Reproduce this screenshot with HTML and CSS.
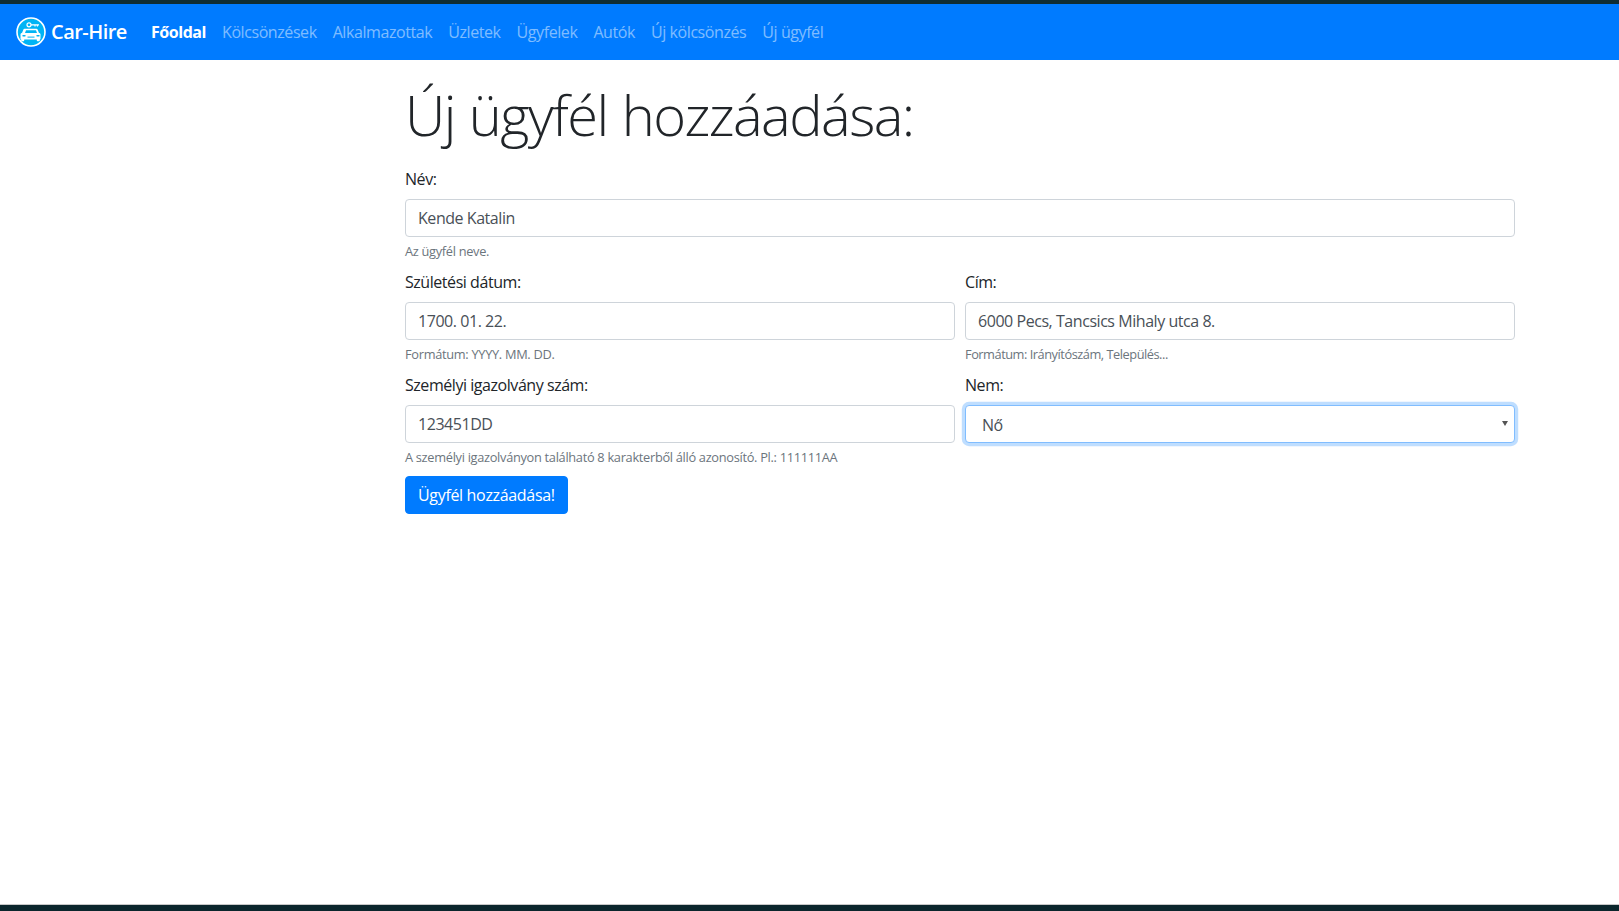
FILE: index.html
```html
<!DOCTYPE html>
<html lang="hu">
<head>
    <meta charset="UTF-8">
    <meta name="viewport" content="width=device-width, initial-scale=1.0">
    <title>Car-Hire</title>
    <link rel="stylesheet" href="styles.css">
</head>
<body>

<div class="top-strip"></div>

<header class="navbar">
    <a class="brand" href="#">
        <svg class="brand-logo" viewBox="0 0 30 30" width="30" height="30" aria-hidden="true">
            <circle cx="15" cy="15" r="14" fill="#00b4f5" stroke="#fff" stroke-width="1.6"/>
            <!-- key -->
            <circle cx="13" cy="7.800" r="2" fill="none" stroke="#fff" stroke-width="1.200"/>
            <path d="M15 7.200h8v1.200h-1v1.200h-1.200V8.400h-1.200v1.200h-1.200V8.400H15z" fill="#fff"/>
            <!-- car -->
            <path d="M9.600 11.800h10.800c.6 0 1 .3 1.200.8l1.300 3.200 1 .5c.4.2.6.6.6 1v4.400c0 .4-.3.7-.7.700v1.100c0 .4-.3.7-.7.700h-1.600c-.4 0-.7-.3-.7-.7v-1H8.200v1c0 .4-.3.7-.7.700H5.900c-.4 0-.7-.3-.7-.7v-1.100c-.4 0-.7-.3-.7-.7v-4.400c0-.4.2-.8.600-1l1-.5 1.300-3.200c.2-.5.700-.8 1.200-.8z" fill="#fff"/>
            <path d="M10 13.200h10l1 2.800H9z" fill="#00b4f5"/>
            <rect x="6.300" y="18" width="3.400" height="1.600" rx=".8" fill="#00b4f5"/>
            <rect x="20.300" y="18" width="3.400" height="1.600" rx=".8" fill="#00b4f5"/>
            <rect x="11.500" y="19.600" width="7" height="1" fill="#00b4f5"/>
        </svg>
        <span class="brand-name">Car-Hire</span>
    </a>
    <nav class="nav-links">
        <a class="nav-link active" href="#">Főoldal</a>
        <a class="nav-link" href="#">Kölcsönzések</a>
        <a class="nav-link" href="#">Alkalmazottak</a>
        <a class="nav-link" href="#">Üzletek</a>
        <a class="nav-link" href="#">Ügyfelek</a>
        <a class="nav-link" href="#">Autók</a>
        <a class="nav-link" href="#">Új kölcsönzés</a>
        <a class="nav-link" href="#">Új ügyfél</a>
    </nav>
</header>

<main class="content">
    <h1 class="page-title">Új ügyfél hozzáadása:</h1>

    <form class="customer-form">
        <div class="form-group">
            <label for="name">Név:</label>
            <input class="form-control" type="text" id="name" value="Kende Katalin">
            <small class="form-text">Az ügyfél neve.</small>
        </div>

        <div class="form-row">
            <div class="form-group">
                <label for="birth">Születési dátum:</label>
                <input class="form-control" type="text" id="birth" value="1700. 01. 22.">
                <small class="form-text">Formátum: YYYY. MM. DD.</small>
            </div>
            <div class="form-group">
                <label for="address">Cím:</label>
                <input class="form-control" type="text" id="address" value="6000 Pecs, Tancsics Mihaly utca 8.">
                <small class="form-text form-text-tight">Formátum: Irányítószám, Település...</small>
            </div>
        </div>

        <div class="form-row">
            <div class="form-group">
                <label for="idcard">Személyi igazolvány szám:</label>
                <input class="form-control" type="text" id="idcard" value="123451DD">
                <small class="form-text">A személyi igazolványon található 8 karakterből álló azonosító. Pl.: 111111AA</small>
            </div>
            <div class="form-group">
                <label for="gender">Nem:</label>
                <div class="select-wrap">
                    <select class="form-control focused" id="gender">
                        <option>Nő</option>
                        <option>Férfi</option>
                    </select>
                </div>
            </div>
        </div>

        <button class="btn-primary" type="submit">Ügyfél hozzáadása!</button>
    </form>
</main>

<footer class="bottom-strip"></footer>

</body>
</html>
```

FILE: styles.css
```css
* {
    box-sizing: border-box;
}
html, body {
    height: 100%;
}
body {
    font-family: "Open Sans", Arial, sans-serif;
    font-size: 16px;
    line-height: 1.5;
    letter-spacing: -0.45px;
    color: #212529;
    margin: 0;
    padding: 0;
    background-color: #fff;
    display: flex;
    flex-direction: column;
    overflow: hidden;
}
a {
    text-decoration: none;
}
.top-strip {
    height: 4px;
    background-color: #0f2d33;
}
.navbar {
    height: 56px;
    padding: 8px 16px;
    background-color: #007bff;
    display: flex;
    align-items: center;
}
.brand {
    display: flex;
    align-items: center;
    gap: 5px;
    width: 111px;
    margin-right: 16px;
    color: #fff;
    font-size: 20px;
    font-weight: 600;
    letter-spacing: -0.55px;
    white-space: nowrap;
}
.brand-logo {
    flex: none;
}
.nav-links {
    display: flex;
}
.nav-link {
    padding: 8px;
    letter-spacing: -0.42px;
    color: rgba(255, 255, 255, .5);
}
.nav-link.active {
    color: #fff;
    font-weight: 700;
    letter-spacing: -0.45px;
}
.content {
    flex: 1;
    width: 1140px;
    margin-left: 390px;
    padding: 15px 15px 0;
}
.page-title {
    font-size: 56px;
    font-weight: 300;
    line-height: 1.2;
    margin: 6px 0 19px;
    letter-spacing: -1.55px;
    word-spacing: 1px;
}
.form-group {
    flex: 1;
    min-width: 0;
    margin-bottom: 8.8px;
}
.form-row {
    display: flex;
    gap: 10px;
}
label {
    display: block;
    margin-bottom: 8px;
}
.form-control {
    display: block;
    width: 100%;
    height: 38px;
    padding: 6px 12px;
    font: inherit;
    letter-spacing: inherit;
    color: #495057;
    background-color: #fff;
    border: 1px solid #ced4da;
    border-radius: 4px;
}
.select-wrap {
    position: relative;
}
.select-wrap::after {
    content: "";
    position: absolute;
    top: 16px;
    right: 7px;
    border-top: 5px solid #555;
    border-left: 3px solid transparent;
    border-right: 3px solid transparent;
    pointer-events: none;
}
select.form-control {
    appearance: none;
    padding: 7px 16px 5px;
}
.form-control.focused {
    border-color: #80bdff;
    box-shadow: 0 0 0 3.2px rgba(0, 123, 255, .25);
    outline: 0;
}
.form-text {
    display: block;
    margin-top: 5px;
    font-size: 12.8px;
    letter-spacing: -0.3px;
    color: #6c757d;
}
.form-text-tight {
    letter-spacing: -0.47px;
}
.btn-primary {
    display: block;
    height: 38px;
    padding: 6px 12px;
    font: inherit;
    letter-spacing: -0.33px;
    color: #fff;
    background-color: #007bff;
    border: 1px solid #007bff;
    border-radius: 4px;
}
.bottom-strip {
    height: 7px;
    background-color: #0b262c;
    border-top: 1px solid #c8c8c8;
}
```
